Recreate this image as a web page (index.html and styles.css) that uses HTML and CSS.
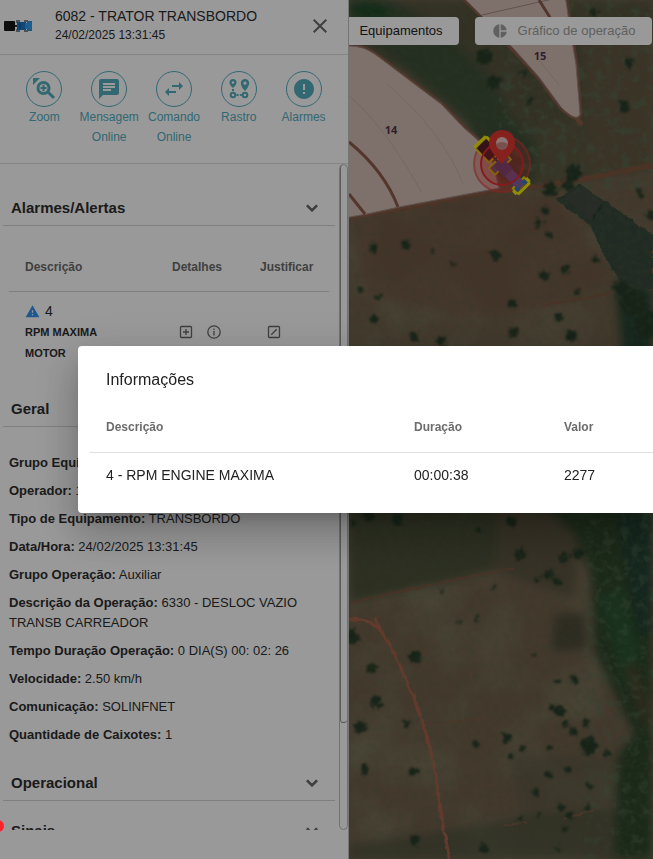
FILE: index.html
```html
<!DOCTYPE html>
<html lang="pt-BR">
<head>
<meta charset="utf-8">
<title>6082 - TRATOR TRANSBORDO</title>
<link rel="stylesheet" href="styles.css">
</head>
<body>
<div class="app">
  <aside class="panel">
    <header class="panel-head">
      <svg class="vehicle" viewBox="0 0 30 14" aria-hidden="true">
        <rect x="0" y="2" width="11" height="10" rx="1" fill="#161616"/>
        <path d="M11 7h4" stroke="#333" stroke-width="2"/>
        <path d="M12 1h4v3h-4zM12 10h4v3h-4zM20 1h4v2h-4zM20 11h4v2h-4z" fill="#7d8b9a"/>
        <rect x="13" y="3" width="9" height="8" fill="#1a78c4"/>
        <path d="M21 4h7v6h-7z" fill="#2f9df0"/>
        <path d="M23 2h5v2h-5zM23 10h5v2h-5z" fill="#3b93d8"/>
        <path d="M16 4v6" stroke="#0d4f92"/>
      </svg>
      <div class="panel-title">
        <h1>6082 - TRATOR TRANSBORDO</h1>
        <time>24/02/2025 13:31:45</time>
      </div>
      <button class="icon-button" type="button" aria-label="Fechar">
        <svg width="14" height="14" viewBox="0 0 14 14"><path d="M.7.7l12.6 12.6M13.3.7L.7 13.3" stroke="currentColor" stroke-width="2"/></svg>
      </button>
    </header>

    <nav class="actions">
      <button type="button"><span class="ring"><svg viewBox="0 0 24 24"><path d="M1 1h7L1 8z"/><circle cx="11.500" cy="11" r="5.500" fill="none" stroke="currentColor" stroke-width="3"/><path d="M15 14l7 7" stroke="currentColor" stroke-width="3"/><path d="M11.500 8v6M8.500 11h6" stroke="currentColor" stroke-width="2"/></svg></span>Zoom</button>
      <button type="button"><span class="ring"><svg viewBox="0 0 24 24"><path d="M20 2H4c-1.100 0-1.990.9-1.990 2L2 22l4-4h14c1.100 0 2-.9 2-2V4c0-1.100-.9-2-2-2zM6 9h12v2H6V9zm8 5H6v-2h8v2zm4-6H6V6h12v2z"/></svg></span>Mensagem Online</button>
      <button type="button"><span class="ring"><svg viewBox="0 0 24 24"><path d="M6.990 11L3 15l3.990 4v-3H14v-2H6.990v-3zM21 9l-3.990-4v3H10v2h7.010v3L21 9z"/></svg></span>Comando Online</button>
      <button type="button"><span class="ring"><svg viewBox="0 0 24 24"><path fill-rule="evenodd" d="M6 2a3.500 3.500 0 0 0-3.500 3.500C2.500 8 6 11 6 11s3.500-3 3.500-5.500A3.500 3.500 0 0 0 6 2zm0 2.200a1.300 1.300 0 1 1 0 2.600 1.300 1.300 0 0 1 0-2.600zM18 2a4.200 4.200 0 0 0-4.200 4.200C13.800 9.500 18 14 18 14s4.200-4.500 4.200-7.800A4.200 4.200 0 0 0 18 2zm0 2.600a1.600 1.600 0 1 1 0 3.200 1.600 1.600 0 0 1 0-3.200z"/><g fill="none" stroke="currentColor" stroke-width="2"><circle cx="6" cy="18" r="2.300"/><circle cx="18" cy="18" r="2.300"/></g><path d="M5 12h2v2H5zM9.500 17h2v2h-2zM12.800 17h2v2h-2z"/></svg></span>Rastro</button>
      <button type="button"><span class="ring"><svg viewBox="0 0 24 24"><path d="M12 2C6.480 2 2 6.480 2 12s4.480 10 10 10 10-4.480 10-10S17.520 2 12 2zm1 15h-2v-2h2v2zm0-4h-2V7h2v6z"/></svg></span>Alarmes</button>
    </nav>

    <div class="scroll">
      <div class="sections">
        <section>
          <h2><button type="button">Alarmes/Alertas<svg viewBox="0 0 24 24"><path d="M16.590 8.590L12 13.170 7.410 8.590 6 10l6 6 6-6z"/></svg></button></h2>
          <div class="alarm-body">
            <table class="alarms">
              <thead><tr><th class="c-desc">Descrição</th><th class="c-det">Detalhes</th><th>Justificar</th></tr></thead>
              <tbody><tr>
                <td>
                  <span class="code"><svg viewBox="0 0 24 24"><path d="M1 21h22L12 2 1 21zm12-3h-2v-2h2v2zm0-4h-2v-4h2v4z"/></svg>4</span>
                  <strong>RPM MAXIMA MOTOR</strong>
                </td>
                <td><div class="tools">
                  <button type="button" aria-label="Detalhes"><svg viewBox="0 0 14 14"><rect x="1.500" y="1.500" width="11" height="11" rx="1"/><path d="M7 4v6M4 7h6"/></svg></button>
                  <button type="button" aria-label="Informações"><svg viewBox="0 0 14 14"><circle cx="7" cy="7" r="6.200"/><path d="M7 6v4.500M7 3.500V5"/></svg></button>
                </div></td>
                <td><div class="tools"><button type="button" aria-label="Justificar"><svg viewBox="0 0 14 14"><rect x="1.500" y="1.500" width="11" height="11" rx="1"/><path d="M4.300 9.700l5.400-5.400"/></svg></button></div></td>
              </tr></tbody>
            </table>
          </div>
        </section>
        <section>
          <h2><button type="button">Geral<svg viewBox="0 0 24 24"><path d="M16.590 8.590L12 13.170 7.410 8.590 6 10l6 6 6-6z"/></svg></button></h2>
          <div class="facts">
            <p><b>Grupo Equipamento:</b> TRANSBORDO</p>
            <p><b>Operador:</b> 1</p>
            <p><b>Tipo de Equipamento:</b> TRANSBORDO</p>
            <p><b>Data/Hora:</b> 24/02/2025 13:31:45</p>
            <p><b>Grupo Operação:</b> Auxiliar</p>
            <p><b>Descrição da Operação:</b> 6330 - DESLOC VAZIO TRANSB CARREADOR</p>
            <p><b>Tempo Duração Operação:</b> 0 DIA(S) 00: 02: 26</p>
            <p><b>Velocidade:</b> 2.50 km/h</p>
            <p><b>Comunicação:</b> SOLINFNET</p>
            <p><b>Quantidade de Caixotes:</b> 1</p>
          </div>
        </section>
        <section class="closed">
          <h2><button type="button">Operacional<svg viewBox="0 0 24 24"><path d="M16.590 8.590L12 13.170 7.410 8.590 6 10l6 6 6-6z"/></svg></button></h2>
        </section>
        <section class="closed">
          <h2><button type="button">Sinais<svg viewBox="0 0 24 24"><path d="M16.590 8.590L12 13.170 7.410 8.590 6 10l6 6 6-6z"/></svg></button></h2>
        </section>
      </div>
      <div class="track"><div class="thumb"></div></div>
    </div>
  </aside>

  <main class="map">
    <svg class="terrain" viewBox="0 0 304 859" preserveAspectRatio="xMinYMin slice" aria-hidden="true">
      <defs>
        <filter id="soft" x="-20%" y="-20%" width="140%" height="140%"><feGaussianBlur stdDeviation="5"/></filter>
        <filter id="edge"><feTurbulence type="fractalNoise" baseFrequency=".15" numOctaves="2" seed="4"/><feDisplacementMap in="SourceGraphic" scale="4" xChannelSelector="R" yChannelSelector="G"/><feGaussianBlur stdDeviation=".5"/></filter>
        <filter id="leaf"><feTurbulence type="fractalNoise" baseFrequency=".22" numOctaves="3" seed="9"/><feDisplacementMap in="SourceGraphic" scale="10" xChannelSelector="R" yChannelSelector="G"/><feGaussianBlur stdDeviation=".8"/></filter>
        <filter id="grain" x="0" y="0" width="100%" height="100%"><feTurbulence type="fractalNoise" baseFrequency=".16" numOctaves="4" seed="8"/><feColorMatrix values="0 0 0 0 .08  0 0 0 0 .12  0 0 0 0 .06  1.600 0 0 0 -.68"/></filter>
        <filter id="scrub" x="0" y="0" width="100%" height="100%"><feTurbulence type="fractalNoise" baseFrequency=".11" numOctaves="3" seed="31"/><feColorMatrix values="0 0 0 0 .1  0 0 0 0 .18  0 0 0 0 .1  4 0 0 0 -2"/></filter>
        <filter id="patches" x="0" y="0" width="100%" height="100%"><feTurbulence type="fractalNoise" baseFrequency=".018" numOctaves="3" seed="21"/><feColorMatrix values="0 0 0 0 .28  0 0 0 0 .34  0 0 0 0 .2  0 1.800 0 0 -.7"/></filter>
      </defs>
      <rect width="304" height="859" fill="#70604b"/>
      <rect width="304" height="859" filter="url(#patches)" opacity=".35"/>
      <g filter="url(#soft)">
        <path d="M0 0H304V170L228 180 180 190 130 130 60 75 0 45z" fill="#56523c"/>
        <path d="M0 0H45L95 30 140 75 165 120 200 155 215 185 150 180 115 120 60 72 20 42 0 38z" fill="#3d5039"/>
        <path d="M0 0H30L45 15 25 22 0 14z" fill="#214a2b"/>
        <path d="M190 125l40 -5 10 40-20 30-35-5z" fill="#5d583f"/>
        <path d="M235 40h69v130l-65 5z" fill="#64573f"/>
        <path d="M0 217l145-24 60 4 40 50 20 30-60 30-90 10-95-20z" fill="#72513f" opacity=".6"/>
        <path d="M265 280l39 8v70h-30z" fill="#284331"/>
        <path d="M0 500h190l60 45-90 22L0 603z" fill="#4b4f38"/>
        <path d="M150 505l60 5 20 30-5 60-80-30z" fill="#5b523f"/>
        <path d="M190 500H304V859H265L268 755 285 735 245 650 242 575 225 535z" fill="#2d442c"/>
        <path d="M268 515h36v120h-15z" fill="#234131"/>
        <path d="M250 600l22-15 20 70-15 35z" fill="#2a5330"/>
        <path d="M275 665l12 0 15 45-5 25z" fill="#48462f"/>
        <path d="M205 615l30-2 3 35-35 4z" fill="#4d4939"/>
        <path d="M160 755h105v60l-90 10z" fill="#5a5540" opacity=".5"/>
        <path d="M0 845l100-15 90-15 77-5v49H0z" fill="#434c35" opacity=".6"/>
      </g>
      <rect x="150" width="154" height="190" filter="url(#scrub)" opacity=".5"/>
      <rect x="235" y="500" width="69" height="359" filter="url(#scrub)" opacity=".4"/>
      <g filter="url(#edge)">
        <path d="M207 199l24-15 17 12 25 17 31 22v55l-32-8-18-28-12-28z" fill="#37493a"/>
        <path d="M214 196l20-10 19 17-12 17z" fill="#434c40"/>
        <path d="M253 204l-10 16" stroke="#273a2f" stroke-width="2"/>
        <path d="M0 217l50-8 95-18 45-5 35-5 79-16" fill="none" stroke="#7f5641" stroke-width="5"/>
        <path d="M195 305l70-12M0 603l90-20 75-15" fill="none" stroke="#7b5541" stroke-width="2"/>
        <path d="M0 619c14 0 20 2 28 8 14 14 20 33 32 60 12 25 22 60 27 90l8 55 6 27M25 617l6 12" fill="none" stroke="#a7624b" stroke-width="3"/>
        <path d="M75 724l60-5M155 826l22-4M215 818l30-8" fill="none" stroke="#7b5d46" stroke-width="2"/>
      </g>
      <path d="M-5 46C14 45 22 51 35 61L60 80 92 104 115 128 140 150 150 188 50 207 18 214-5 218zM112-5L133 16 165 49 190 77 212 107Q228 123 231 114L227 65 222 35 216-5z" fill="#92604f" stroke="#8a5b4a" stroke-width="5" stroke-linejoin="round"/>
      <path d="M160 45L224 113 233 125" fill="none" stroke="#8a5b4a" stroke-width="5"/>
      <g fill="#283a28" filter="url(#leaf)">
        <circle cx="24" cy="248" r="5"/><circle cx="57" cy="245" r="5"/><circle cx="146" cy="256" r="5"/><circle cx="195" cy="276" r="5"/><circle cx="216" cy="269" r="4"/><circle cx="196" cy="211" r="4"/><circle cx="190" cy="223" r="4"/><circle cx="12" cy="290" r="3"/><circle cx="30" cy="296" r="3"/><circle cx="25" cy="319" r="4"/><circle cx="65" cy="337" r="5"/><circle cx="92" cy="341" r="5"/><circle cx="163" cy="304" r="4"/><circle cx="210" cy="317" r="4"/><circle cx="165" cy="332" r="5"/><circle cx="222" cy="336" r="6"/><circle cx="246" cy="260" r="3"/><circle cx="302" cy="216" r="5"/><circle cx="201" cy="190" r="7"/><circle cx="225" cy="173" r="8"/><circle cx="218" cy="185" r="6"/><circle cx="106" cy="264" r="2"/><circle cx="83" cy="252" r="2"/><circle cx="200" cy="235" r="3"/><circle cx="228" cy="292" r="3"/><circle cx="291" cy="193" r="4"/><circle cx="135" cy="57" r="8"/><circle cx="145" cy="82" r="7"/><circle cx="181" cy="101" r="4"/><circle cx="175" cy="73" r="4"/><circle cx="274" cy="107" r="5"/><circle cx="280" cy="63" r="5"/><circle cx="245" cy="12" r="4"/><circle cx="285" cy="303" r="13"/><circle cx="272" cy="288" r="7"/><circle cx="300" cy="325" r="14"/>
        <circle cx="20" cy="515" r="6"/><circle cx="48" cy="519" r="6"/><circle cx="4" cy="523" r="3"/><circle cx="131" cy="530" r="3"/><circle cx="162" cy="522" r="5"/><circle cx="228" cy="554" r="6"/><circle cx="215" cy="558" r="5"/><circle cx="171" cy="554" r="6"/><circle cx="200" cy="574" r="4"/><circle cx="188" cy="580" r="3"/><circle cx="208" cy="581" r="4"/><circle cx="93" cy="591" r="2"/><circle cx="145" cy="587" r="2"/><circle cx="110" cy="622" r="2"/><circle cx="128" cy="618" r="2"/><circle cx="3" cy="637" r="7"/><circle cx="66" cy="657" r="6"/><circle cx="23" cy="669" r="5"/><circle cx="27" cy="702" r="6"/><circle cx="12" cy="727" r="6"/><circle cx="58" cy="724" r="4"/><circle cx="16" cy="770" r="5"/><circle cx="65" cy="771" r="4"/><circle cx="66" cy="840" r="5"/><circle cx="135" cy="849" r="5"/><circle cx="185" cy="655" r="2"/><circle cx="225" cy="679" r="4"/><circle cx="208" cy="681" r="3"/><circle cx="211" cy="711" r="6"/><circle cx="202" cy="708" r="3"/><circle cx="217" cy="724" r="3"/><circle cx="236" cy="723" r="4"/><circle cx="224" cy="732" r="4"/><circle cx="240" cy="746" r="9"/><circle cx="258" cy="753" r="3"/><circle cx="158" cy="738" r="5"/><circle cx="127" cy="743" r="3"/><circle cx="173" cy="747" r="3"/><circle cx="163" cy="756" r="3"/><circle cx="200" cy="748" r="3"/><circle cx="200" cy="775" r="4"/><circle cx="219" cy="770" r="3"/><circle cx="241" cy="786" r="3"/><circle cx="187" cy="793" r="3"/><circle cx="212" cy="808" r="4"/><circle cx="221" cy="815" r="4"/><circle cx="190" cy="813" r="3"/><circle cx="171" cy="819" r="3"/><circle cx="238" cy="808" r="3"/><circle cx="216" cy="829" r="3"/><circle cx="210" cy="849" r="3"/>
      </g>
      <rect width="304" height="859" filter="url(#grain)" opacity=".4"/>
      <g fill="#d3bdb4" stroke="#9c8a84">
        <path d="M-5 46C14 45 22 51 35 61L60 80 92 104 115 128 140 150 150 188 50 207 18 214-5 218z"/>
        <path d="M112-5L133 16 165 49 190 77 212 107Q228 123 231 114L227 65 222 35 216-5z"/>
      </g>
      <g fill="none" stroke="#9c8a84">
        <path d="M0 96q36 30 73 97M38 84q55 47 76 100M190 60l20 25" opacity=".35"/>
        <path d="M133 15L208-2"/>
      </g>
      <path d="M0 142c22 18 39 39 49 65M0 194l16 20M190 0l12 19" fill="none" stroke="#8c5b4b" stroke-width="3"/>
      <g class="field-label"><text x="42" y="134" text-anchor="middle">14</text><text x="191" y="60" text-anchor="middle">15</text></g>
      <circle cx="153" cy="164" r="28" fill="#e83a38" fill-opacity=".25" stroke="#dc3a38" stroke-opacity=".6" stroke-width="2"/>
      <g transform="translate(154 167) rotate(46)">
        <g stroke="#e0d010" stroke-width="2" stroke-linejoin="round" fill="#a9792e">
          <path d="M-33-9h20V7h-20z" fill="#5a2028"/>
          <path d="M-9-11h9v22h-9z"/><path d="M22-8h8V8h-8z"/>
        </g>
        <path d="M-34-9v16M-33-9h12M30-8V8M24-9h5M24 9h5" stroke="#f2ea00" stroke-width="3" fill="none"/>
        <path d="M-15-1h10v2h-10z" fill="#69374e"/><path d="M-8-10h7v20h-7z" fill="#7c6084"/>
        <rect x="-7" y="-6" width="15" height="12" fill="#705187"/><rect x="8" y="-5" width="19" height="10" fill="#8061a4"/>
        <path d="M24-7h4v4h-4zM24 3h4v4h-4z" fill="#3279bc"/>
      </g>
      <circle cx="153" cy="164" r="21" fill="#d62027" fill-opacity=".25" stroke="#e02a2d" stroke-width="2"/>
      <path d="M153 130c-7.500 0-13 5.500-13 13 0 8 7 13 13 21 6-8 13-13 13-21 0-7.500-5.500-13-13-13z" fill="#df3732"/>
      <circle cx="153" cy="143" r="6" fill="#e8c5c2"/><path d="M147 144q6-4 12 0a6 6 0 0 1-12 0z" fill="#c98782"/>
    </svg>
    <div class="map-bar">
      <button class="chip first" type="button">Equipamentos</button>
      <button class="chip" type="button" disabled><svg viewBox="0 0 24 24"><path d="M11 2v20c-5.070-.5-9-4.790-9-10s3.930-9.500 9-10zm2.030 0v8.990H22c-.47-4.740-4.240-8.520-8.970-8.990zm0 11.010V22c4.740-.47 8.500-4.250 8.970-8.990h-8.970z"/></svg>Gráfico de operação</button>
    </div>
  </main>
</div>

<div class="backdrop">
  <div class="dialog" role="dialog" aria-modal="true" aria-labelledby="dlg">
    <h2 id="dlg">Informações</h2>
    <table>
      <thead><tr><th class="d-desc">Descrição</th><th class="d-dur">Duração</th><th>Valor</th></tr></thead>
      <tbody><tr><td>4 - RPM ENGINE MAXIMA</td><td>00:00:38</td><td>2277</td></tr></tbody>
    </table>
  </div>
</div>
<span class="marker"></span>
</body>
</html>
```

FILE: styles.css
```css
* { box-sizing: border-box; }
body {
  margin: 0;
  font-family: "Liberation Sans", Arial, sans-serif;
  font-size: 13px;
  line-height: 20px;
  color: #2e2e2e;
  overflow: hidden;
}
h1, h2, p { margin: 0; }
button {
  margin: 0;
  padding: 0;
  border: 0;
  background: none;
  font: inherit;
  color: inherit;
}
svg { display: block; fill: currentColor; }
table { width: 100%; border-collapse: collapse; table-layout: fixed; }
th, td { text-align: left; }

.app { display: grid; grid-template-columns: 349px 1fr; height: 100vh; }

.panel {
  display: flex;
  flex-direction: column;
  min-height: 0;
  padding-bottom: 29px;
  background: #fff;
  border-right: 1px solid #c4c4c4;
}
.panel-head {
  display: flex;
  align-items: center;
  height: 55px;
  padding: 0 16px 2px 4px;
  border-bottom: 1px solid #dedede;
}
.vehicle { width: 30px; height: 14px; }
.panel-title { flex: 1; padding-left: 21px; }
.panel-title h1 { font-size: 14px; font-weight: 400; line-height: 19px; }
.panel-title time { display: block; font-size: 12px; line-height: 19px; }
.icon-button { padding: 5px; color: #6a6a6a; }

.actions {
  display: grid;
  grid-template-columns: repeat(5, 1fr);
  padding: 16px 12px;
  border-bottom: 1px solid #dedede;
  color: #53aebe;
}
.actions button {
  display: flex;
  flex-direction: column;
  align-items: center;
  font-size: 12px;
}
.ring {
  display: grid;
  place-items: center;
  width: 36px;
  height: 36px;
  border: 1px solid currentColor;
  border-radius: 50%;
}
.ring svg { width: 24px; height: 24px; }

.scroll { display: flex; flex: 1; min-height: 0; }
.sections { flex: 1; padding: 26px 4px 0 3px; overflow: hidden; }
.sections h2 {
  padding: 8px 8px 7px;
  border-bottom: 1px solid #d4d4d4;
  font-size: 15px;
  line-height: 20px;
}
.sections h2 button { display: flex; justify-content: space-between; align-items: center; width: 100%; }
.sections h2 svg { width: 22px; height: 22px; margin: -1px 4px -1px 0; color: #6a6a6a; stroke: currentColor; stroke-width: 1px; }
.closed + .closed { margin-top: 12px; }
.track {
  width: 9px;
  border: 1px solid #bcbcbc;
  border-radius: 5px;
}
.thumb { height: 84%; border-bottom: 1px solid #888; border-left: 1px solid #999; border-radius: 5px; }

.alarm-body { padding: 18px 6px; }
.alarms th { height: 47px; padding: 0 0 0 16px; border-bottom: 1px solid #d4d4d4; font-size: 12px; color: #6c6c6c; }
.alarms .c-desc { width: 147px; }
.alarms .c-det { width: 88px; }
.alarms td { padding: 9px 16px; line-height: 21px; }
.alarms td:nth-child(n + 2) { padding-right: 0; }
.alarms strong { display: block; font-size: 11px; }
.code { display: flex; align-items: center; gap: 5px; font-size: 14px; }
.code svg { width: 15px; height: 15px; color: #3393ef; }
.tools { display: flex; gap: 14px; padding-left: 7px; color: #6a6a6a; }
.tools svg { width: 14px; height: 14px; fill: none; stroke: currentColor; stroke-width: 1.3; }

.facts { display: grid; gap: 8px; padding: 26px 6px 20px; }

.map { position: relative; overflow: hidden; }
.terrain { position: absolute; inset: 0; width: 100%; height: 100%; }
.field-label { font: 700 11px "Open Sans", sans-serif; fill: #4f3348; }
.map-bar { position: relative; display: flex; gap: 16px; padding: 17px 1px 0 0; }
.chip {
  display: flex;
  align-items: center;
  justify-content: center;
  gap: 10px;
  flex: 1;
  height: 28px;
  border-radius: 4px;
  background: #fff;
  color: #222;
  white-space: nowrap;
}
.chip svg { width: 16px; height: 16px; }
.chip:disabled { color: #a0a0a0; }
.chip.first { flex: 0 0 110px; padding-right: 6px; border-radius: 0 4px 4px 0; }

.backdrop {
  position: fixed;
  inset: 0;
  display: flex;
  align-items: center;
  padding-left: 78px;
  background: rgba(0, 0, 0, .4);
}
.dialog {
  flex: 1;
  padding: 20px 0 15px 12px;
  border-radius: 4px 0 0 4px;
  background: #fff;
  box-shadow: 0 11px 15px -7px rgba(0, 0, 0, .2), 0 24px 38px 3px rgba(0, 0, 0, .14), 0 9px 46px 8px rgba(0, 0, 0, .12);
}
.dialog h2 { padding: 3px 16px 12px; font-size: 16px; font-weight: 400; line-height: 21px; color: #222; }
.dialog th { height: 50px; padding: 0 16px; border-bottom: 1px solid #e0e0e0; font-size: 12px; color: #6c6c6c; }
.dialog td { height: 46px; padding: 0 16px; font-size: 14px; color: #222; }
.d-desc { width: 308px; }
.d-dur { width: 150px; }

.marker {
  position: fixed;
  left: -8px;
  bottom: 27px;
  width: 12px;
  height: 12px;
  border-radius: 0 50% 50% 50%;
  background: #ff2229;
}
```
